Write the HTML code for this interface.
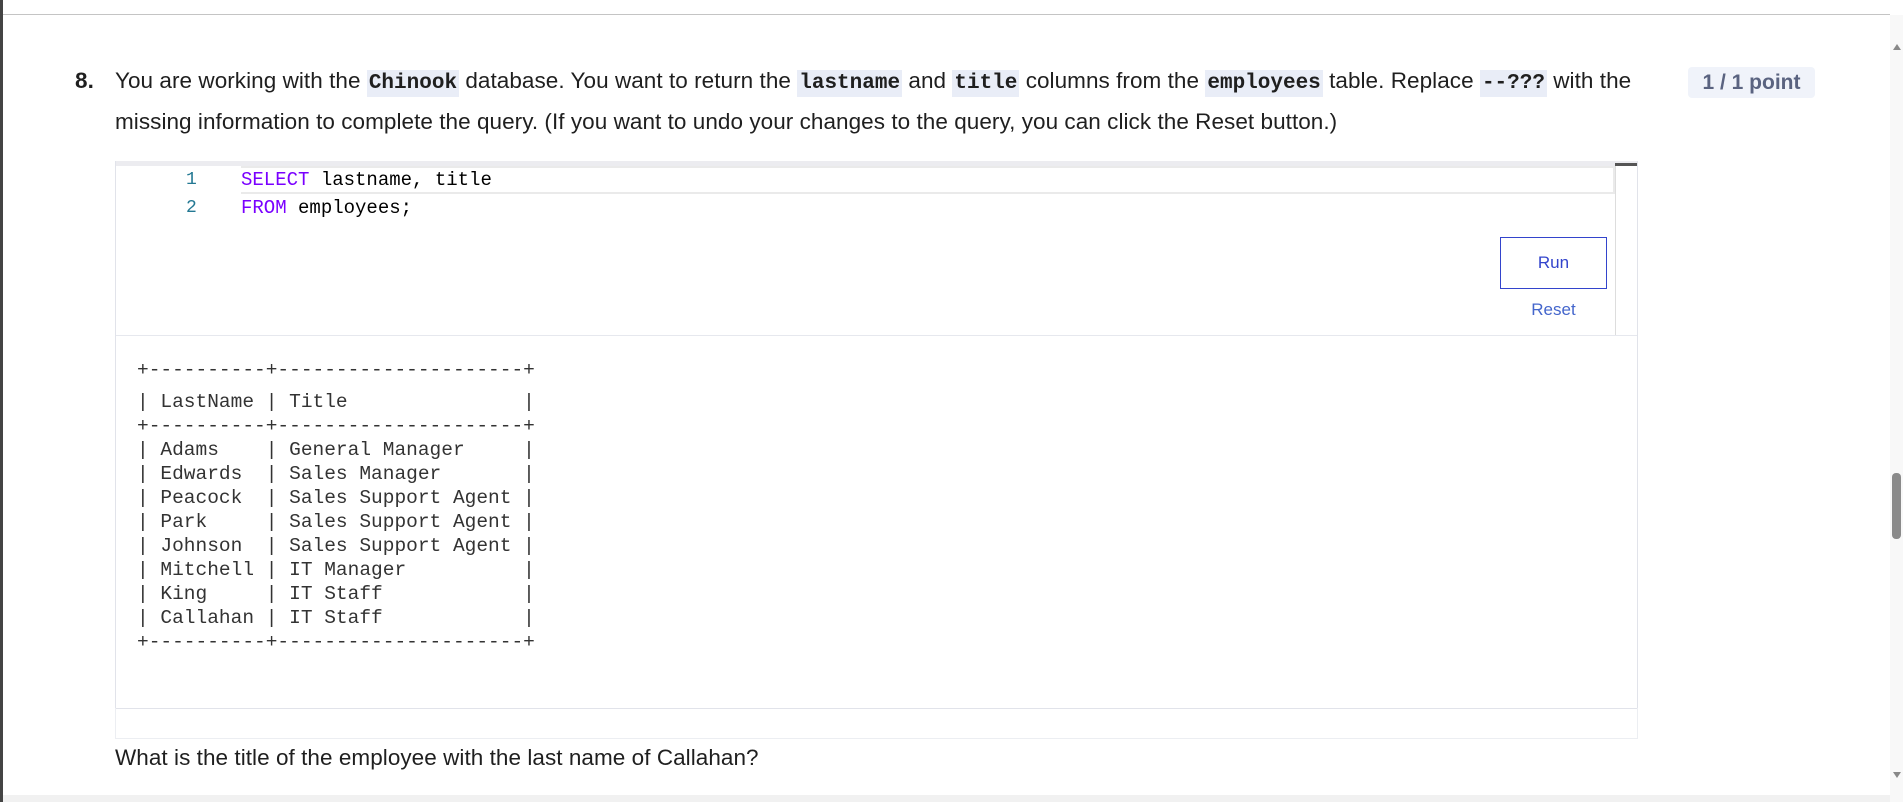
<!DOCTYPE html>
<html><head><meta charset="utf-8"><style>
body{margin:0;width:1903px;height:802px;background:#fff;position:relative;overflow:hidden;font-family:"Liberation Sans",sans-serif;color:#1f1f1f}
.abs{position:absolute}
.q{font-size:22.5px;letter-spacing:0.05px;white-space:nowrap}
code{font-family:"Liberation Mono",monospace;font-weight:bold;font-size:21px;background:#e9edf7;padding:2px 2px;letter-spacing:0}
.mono{font-family:"Liberation Mono",monospace;white-space:pre}
</style></head><body>
<div class="abs" style="left:0;top:0;width:3px;height:802px;background:#444"></div>
<div class="abs" style="left:3px;top:14px;width:1887px;height:1px;background:#c4c4c4"></div>

<div class="abs q" style="left:75px;top:68px;font-weight:bold">8.</div>
<div class="abs q" style="left:115px;top:68px">You are working with the <code>Chinook</code> database. You want to return the <code>lastname</code> and <code>title</code> columns from the <code>employees</code> table. Replace <code>--???</code> with the</div>
<div class="abs q" style="left:115px;top:109px">missing information to complete the query. (If you want to undo your changes to the query, you can click the Reset button.)</div>

<div class="abs" style="left:1688px;top:67px;width:127px;height:31px;background:#f0f3fa;border-radius:4px;color:#5a6380;font-size:21px;font-weight:bold;line-height:31px;text-align:center">1 / 1 point</div>

<!-- editor -->
<div class="abs" style="left:115px;top:161px;width:1521px;height:546px;border:1px solid #e1e3ea;"></div>
<div class="abs" style="left:116px;top:161px;width:1521px;height:5px;background:#ececf0"></div>
<div class="abs" style="left:241px;top:166px;width:1372px;height:24px;border:2px solid #eaeaea;border-left:none"></div>
<div class="abs" style="left:1615px;top:166px;width:1px;height:169px;background:#ddd"></div>
<div class="abs" style="left:1615px;top:163px;width:22px;height:3px;background:#555"></div>
<div class="abs mono" style="left:186px;top:166px;font-size:18px;line-height:28px;color:#237893">1
2</div>
<div class="abs mono" style="left:241px;top:166px;font-size:19px;line-height:28px;color:#000"><span style="color:#7a00ff">SELECT</span> lastname, title
<span style="color:#7a00ff">FROM</span> employees;</div>

<div class="abs" style="left:1500px;top:237px;width:105px;height:50px;border:1px solid #3344cc;color:#3344cc;font-size:17px;line-height:50px;text-align:center">Run</div>
<div class="abs" style="left:1500px;top:300px;width:107px;color:#4466cc;font-size:17px;text-align:center">Reset</div>
<div class="abs" style="left:116px;top:335px;width:1521px;height:1px;background:#e6e8ee"></div>

<div class="abs mono" style="left:137px;top:358px;font-size:19.5px;line-height:24px;color:#333">+----------+---------------------+</div>
<div class="abs mono" style="left:137px;top:390px;font-size:19.5px;line-height:24px;color:#333">| LastName | Title               |
+----------+---------------------+
| Adams    | General Manager     |
| Edwards  | Sales Manager       |
| Peacock  | Sales Support Agent |
| Park     | Sales Support Agent |
| Johnson  | Sales Support Agent |
| Mitchell | IT Manager          |
| King     | IT Staff            |
| Callahan | IT Staff            |
+----------+---------------------+</div>

<div class="abs" style="left:115px;top:708px;width:1521px;height:30px;border:1px solid #eceef2;border-top:none"></div>
<div class="abs q" style="left:115px;top:745px">What is the title of the employee with the last name of Callahan?</div>

<div class="abs" style="left:3px;top:795px;width:1887px;height:7px;background:#f1f1f1"></div>
<div class="abs" style="left:1890px;top:15px;width:13px;height:787px;background:#f8f8f8"></div>
<div class="abs" style="left:1893px;top:44px;width:0;height:0;border-left:4px solid transparent;border-right:4px solid transparent;border-bottom:6px solid #888"></div>
<div class="abs" style="left:1892px;top:473px;width:9px;height:66px;background:#8a8a8a;border-radius:4px"></div>
<div class="abs" style="left:1893px;top:772px;width:0;height:0;border-left:4px solid transparent;border-right:4px solid transparent;border-top:6px solid #888"></div>
</body></html>
